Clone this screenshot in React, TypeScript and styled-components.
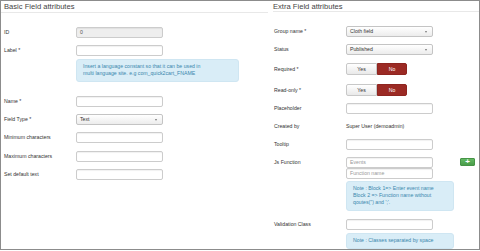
import React from "react";
import styled, { createGlobalStyle } from "styled-components";

const GlobalStyle = createGlobalStyle`
  html, body {
    margin: 0;
    padding: 0;
    background: #fff;
  }
  body {
    font-family: "Liberation Sans", Arial, sans-serif;
    color: #333;
  }
  * {
    box-sizing: border-box;
  }
`;

const Frame = styled.div`
  width: 480px;
  height: 250px;
  border: 1px solid #8c8c8c;
  display: flex;
  gap: 5px;
  overflow: hidden;
`;

const Column = styled.div<{ $width: number; $pad: number }>`
  width: ${(p) => p.$width}px;
  flex-shrink: 0;
  display: flex;
  flex-direction: column;
  .pad {
    padding-left: ${(p) => p.$pad}px;
  }
`;

const Heading = styled.div<{ $pad: number }>`
  height: 12px;
  padding: 2px 0 0 ${(p) => p.$pad}px;
  font-size: 7.6px;
  line-height: 8px;
  color: #444;
  border-bottom: 1px solid #e8e8e8;
  white-space: nowrap;
`;

const Body = styled.div<{ $pad: number }>`
  padding: 14px 0 0 ${(p) => p.$pad}px;
  display: flex;
  flex-direction: column;
`;

const Row = styled.div<{ $mb?: number; $top?: boolean }>`
  display: flex;
  align-items: ${(p) => (p.$top ? "flex-start" : "center")};
  margin-bottom: ${(p) => (p.$mb === undefined ? 7 : p.$mb)}px;
`;

const Label = styled.div`
  width: 72px;
  flex-shrink: 0;
  font-size: 5.2px;
  line-height: 11px;
  color: #333;
  white-space: nowrap;
`;

const Input = styled.div<{ $disabled?: boolean; $placeholder?: boolean }>`
  width: 87px;
  height: 11px;
  border: 1px solid #ccc;
  border-radius: 2px;
  background: ${(p) => (p.$disabled ? "#eee" : "#fff")};
  box-shadow: inset 0 1px 1px rgba(0, 0, 0, 0.06);
  padding-left: 3px;
  font-size: 5.2px;
  line-height: 9px;
  color: ${(p) => (p.$placeholder ? "#999" : "#555")};
`;

const Select = styled.div`
  position: relative;
  width: 87px;
  height: 11px;
  border: 1px solid #c4c4c4;
  border-radius: 2px;
  background: linear-gradient(#fff, #ececec);
  padding-left: 3px;
  font-size: 5.2px;
  line-height: 9px;
  color: #333;
  &::after {
    content: "";
    position: absolute;
    right: 5px;
    top: 4px;
    border-left: 1.5px solid transparent;
    border-right: 1.5px solid transparent;
    border-top: 2px solid #777;
  }
`;

const Stack = styled.div`
  display: flex;
  flex-direction: column;
`;

const Info = styled.div<{ $width: number; $mb: number; $mt: number }>`
  margin: ${(p) => p.$mt}px 0 ${(p) => p.$mb}px 72px;
  width: ${(p) => p.$width}px;
  background: #d9edf7;
  border: 1px solid #cfe6f2;
  border-radius: 3px;
  padding: 3px 6px 4px;
  font-size: 5.2px;
  line-height: 7px;
  color: #3a87ad;
`;

const Toggle = styled.div`
  display: flex;
  height: 12px;
`;

const ToggleBtn = styled.div<{ $active?: boolean }>`
  width: ${(p) => (p.$active ? 30 : 31)}px;
  height: 12px;
  display: flex;
  align-items: center;
  justify-content: center;
  font-size: 5.2px;
  color: ${(p) => (p.$active ? "#fff" : "#333")};
  background: ${(p) =>
    p.$active ? "#9b2a24" : "linear-gradient(#fff, #e9e9e9)"};
  border: 1px solid ${(p) => (p.$active ? "#8e2520" : "#c8c8c8")};
  border-radius: ${(p) => (p.$active ? "0 2px 2px 0" : "2px 0 0 2px")};
`;

const Value = styled.div`
  font-size: 5.2px;
  line-height: 11px;
  color: #333;
`;

const AddBtn = styled.div`
  margin: 1px 0 0 27px;
  width: 15px;
  height: 8px;
  border-radius: 1px;
  background: linear-gradient(#62b962, #4a9c4a);
  border: 1px solid #469446;
  display: flex;
  align-items: center;
  justify-content: center;
  color: #fff;
  font-size: 8px;
  font-weight: bold;
  line-height: 8px;
`;

export default function App() {
  return (
    <>
      <GlobalStyle />
      <Frame>
        <Column $width={267} $pad={3}>
          <Heading $pad={3}>Basic Field attributes</Heading>
          <Body $pad={3}>
            <Row>
              <Label>ID</Label>
              <Input $disabled>0</Input>
            </Row>
            <Row $mb={3}>
              <Label>Label *</Label>
              <Input />
            </Row>
            <Info $width={163} $mt={0} $mb={14}>
              Insert a language constant so that it can be used in
              <br />
              multi language site. e.g com_quick2cart_FNAME
            </Info>
            <Row>
              <Label>Name *</Label>
              <Input />
            </Row>
            <Row>
              <Label>Field Type *</Label>
              <Select>Text</Select>
            </Row>
            <Row $mb={8}>
              <Label>Minimum characters</Label>
              <Input />
            </Row>
            <Row>
              <Label>Maximum characters</Label>
              <Input />
            </Row>
            <Row>
              <Label>Set default text</Label>
              <Input />
            </Row>
          </Body>
        </Column>
        <Column $width={206} $pad={0}>
          <Heading $pad={0}>Extra Field attributes</Heading>
          <Body $pad={1}>
            <Row>
              <Label>Group name *</Label>
              <Select>Cloth field</Select>
            </Row>
            <Row $mb={8}>
              <Label>Status</Label>
              <Select>Published</Select>
            </Row>
            <Row $mb={9}>
              <Label>Required *</Label>
              <Toggle>
                <ToggleBtn>Yes</ToggleBtn>
                <ToggleBtn $active>No</ToggleBtn>
              </Toggle>
            </Row>
            <Row>
              <Label>Read-only *</Label>
              <Toggle>
                <ToggleBtn>Yes</ToggleBtn>
                <ToggleBtn $active>No</ToggleBtn>
              </Toggle>
            </Row>
            <Row>
              <Label>Placeholder</Label>
              <Input />
            </Row>
            <Row>
              <Label>Created by</Label>
              <Value>Super User (demoadmin)</Value>
            </Row>
            <Row>
              <Label>Tooltip</Label>
              <Input />
            </Row>
            <Row $top $mb={0}>
              <Label>Js Function</Label>
              <Stack>
                <Input $placeholder>Events</Input>
                <Input $placeholder>Function name</Input>
              </Stack>
              <AddBtn>+</AddBtn>
            </Row>
            <Info $width={108} $mt={2} $mb={8}>
              Note : Block 1=&gt; Enter event name
              <br />
              Block 2 =&gt; Function name without
              <br />
              qoutes(&quot;) and &apos;;&apos;.
            </Info>
            <Row $mb={3}>
              <Label>Validation Class</Label>
              <Input />
            </Row>
            <Info $width={108} $mt={0} $mb={0}>
              Note : Classes separated by space
            </Info>
          </Body>
        </Column>
      </Frame>
    </>
  );
}
